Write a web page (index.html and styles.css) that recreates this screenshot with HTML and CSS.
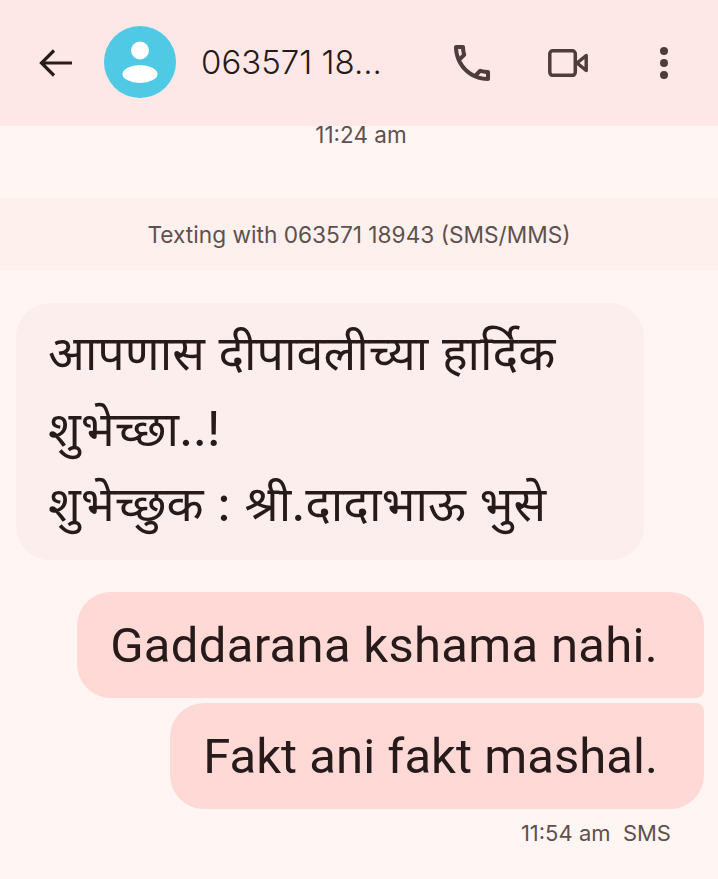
FILE: index.html
```html
<!DOCTYPE html>
<html lang="en">
<head>
	<meta charset="UTF-8">
	<title>Messages</title>
	<link rel="stylesheet" href="styles.css">
</head>
<body>
	<header class="topbar">
		<svg class="back" width="36" height="36" viewBox="0 0 36 36">
			<path d="M34 18H4M16 5.500L3.500 18 16 30.500" fill="none" stroke="#2b1c1c" stroke-width="3.200"/>
		</svg>
		<div class="avatar">
			<svg width="72" height="72" viewBox="0 0 72 72">
				<circle cx="36" cy="24.500" r="9" fill="#fff"/>
				<ellipse cx="36" cy="48" rx="17.500" ry="9" fill="#fff"/>
			</svg>
		</div>
		<div class="contact">063571 18...</div>
		<svg class="action phone" width="36" height="36" viewBox="3 3 18 18">
			<path d="M6.540 5c.06.89.21 1.760.45 2.590l-1.200 1.200c-.41-1.200-.67-2.470-.76-3.790h1.510m9.860 12.020c.85.24 1.720.39 2.600.45v1.490c-1.320-.09-2.590-.35-3.800-.75l1.200-1.190M7.500 3H4c-.55 0-1 .45-1 1 0 9.390 7.610 17 17 17 .55 0 1-.45 1-1v-3.490c0-.55-.45-1-1-1-1.240 0-2.450-.2-3.570-.57-.1-.04-.21-.05-.31-.05-.26 0-.51.1-.71.29l-2.200 2.200c-2.830-1.450-5.150-3.760-6.590-6.590l2.200-2.200c.28-.28.36-.67.25-1.020C8.700 6.450 8.500 5.250 8.500 4c0-.55-.45-1-1-1z" fill="#4f3d3d"/>
		</svg>
		<svg class="action video" width="40" height="28" viewBox="0 0 40 28">
			<rect x="1.800" y="1.800" width="25.500" height="24.500" rx="3" fill="none" stroke="#4f3d3d" stroke-width="3.500"/>
			<path d="M29 14L38.200 6.500V21.500Z" fill="none" stroke="#4f3d3d" stroke-width="3.500" stroke-linejoin="round"/>
		</svg>
		<div class="dots"><span></span><span></span><span></span></div>
	</header>

	<div class="stamp">11:24 am</div>
	<div class="notice">Texting with 063571 18943 (SMS/MMS)</div>

	<main class="thread">
		<div class="bubble incoming">आपणास दीपावलीच्या हार्दिक शुभेच्छा..!<br>शुभेच्छुक : श्री.दादाभाऊ भुसे</div>
		<div class="bubble outgoing first">Gaddarana kshama nahi.</div>
		<div class="bubble outgoing last">Fakt ani fakt mashal.</div>
		<div class="meta">11:54 am&nbsp; SMS</div>
	</main>
</body>
</html>
```

FILE: styles.css
```css
* {
	margin: 0;
	padding: 0;
	box-sizing: border-box;
}
html {
	background: #fff5f3;
}
body {
	height: 879px;
	overflow: hidden;
	background: #fff5f3;
	color: #261a1a;
	font-family: "Inter", "Noto Sans", sans-serif;
}
.topbar {
	display: flex;
	align-items: center;
	height: 126px;
	background: #fde8e7;
	padding-left: 38px;
}
.back {
	flex: none;
}
.avatar {
	flex: none;
	width: 72px;
	height: 72px;
	margin-left: 30px;
	margin-bottom: 2px;
	border-radius: 50%;
	background: #4fc9e4;
}
.contact {
	flex: none;
	width: 253px;
	margin-left: 25px;
	margin-bottom: 2px;
	font-size: 33px;
	font-weight: 300;
}
.action {
	flex: none;
}
.video {
	margin-left: 58px;
}
.dots {
	display: flex;
	flex-direction: column;
	gap: 4px;
	margin-left: 72px;
}
.dots span {
	display: block;
	width: 8px;
	height: 8px;
	border-radius: 50%;
	background: #4f3d3d;
}
.stamp {
	height: 72px;
	padding-left: 4px;
	text-align: center;
	font-size: 22.500px;
	line-height: 18px;
	color: #5f5050;
}
.notice {
	height: 72px;
	background: #fdf0ed;
	text-align: center;
	font-size: 22.700px;
	line-height: 73px;
	color: #5f5050;
}
.thread {
	display: flex;
	flex-direction: column;
	align-items: flex-end;
	padding: 33px 14px 0 16px;
}
.bubble {
	border-radius: 34px;
}
.incoming {
	align-self: flex-start;
	width: 628px;
	height: 257px;
	padding: 12px 32px;
	font-size: 48.300px;
	line-height: 75.500px;
	background: #fbeeec;
}
.outgoing {
	height: 106px;
	padding: 0 46px 0 33px;
	font-family: "Roboto", sans-serif;
	font-size: 49px;
	line-height: 108px;
	background: #fed9d6;
	border-radius: 34px 8px 8px 34px;
}
.first {
	margin-top: 32px;
	border-top-right-radius: 34px;
	letter-spacing: 0.300px;
}
.last {
	margin-top: 5px;
	border-bottom-right-radius: 34px;
	letter-spacing: 0.050px;
}
.meta {
	margin-top: 11px;
	padding-right: 33px;
	font-size: 22px;
	line-height: 26px;
	color: #5f5050;
}
```
